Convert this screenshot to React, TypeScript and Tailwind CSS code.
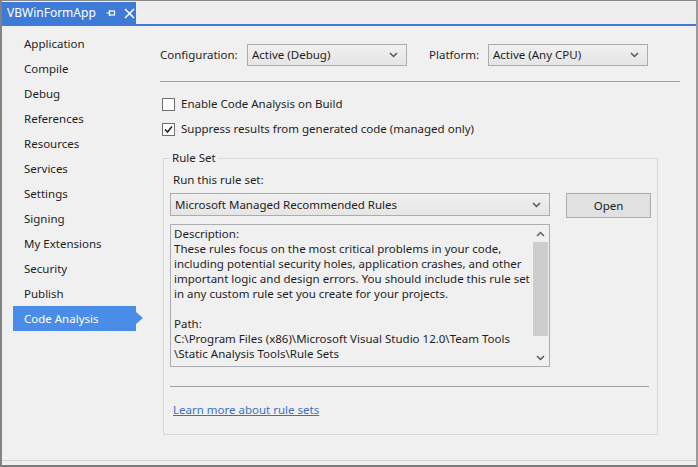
import React from 'react';

const pages = [
  'Application',
  'Compile',
  'Debug',
  'References',
  'Resources',
  'Services',
  'Settings',
  'Signing',
  'My Extensions',
  'Security',
  'Publish',
  'Code Analysis',
];

function Chevron() {
  return (
    <svg width="9" height="6" viewBox="0 0 9 6" className="shrink-0">
      <path d="M1 1 L4.5 4.5 L8 1" fill="none" stroke="#555" strokeWidth="1.5" />
    </svg>
  );
}

function Select({ value, className }: { value: string; className: string }) {
  return (
    <div
      className={
        'flex items-center justify-between border border-[#acacac] bg-gradient-to-b from-[#f0f0f0] to-[#e5e5e5] pl-[4px] pr-[8px] ' +
        className
      }
    >
      <span>{value}</span>
      <Chevron />
    </div>
  );
}

function CheckBox({ checked, label }: { checked?: boolean; label: string }) {
  return (
    <div className="flex items-center h-[14px]">
      <div className="w-[13px] h-[13px] border border-[#707070] bg-white flex items-center justify-center ml-[2px]">
        {checked && (
          <svg width="9" height="9" viewBox="0 0 9 9">
            <path d="M1 4.5 L3.5 7 L8 1.5" fill="none" stroke="#222" strokeWidth="1.6" />
          </svg>
        )}
      </div>
      <span className="ml-[6px]">{label}</span>
    </div>
  );
}

export default function App() {
  return (
    <div
      className="w-[698px] h-[467px] bg-[#f0f0f0] border-t border-t-[#8a8a8a] border-l-2 border-l-[#828282] border-r-2 border-r-[#9a9a9a] border-b-2 border-b-[#7a7a7a] flex flex-col text-[11.5px] text-[#1e1e1e] overflow-hidden"
      style={{ fontFamily: '"Noto Sans", "Open Sans", sans-serif' }}
    >
      {/* tab strip */}
      <div className="h-[23px] flex items-end bg-[#eeeeee]">
        <div className="w-[134px] h-[22px] bg-[#3d7bd6] flex items-center pl-[5px] text-white text-[12px]">
          <span>VBWinFormApp</span>
          <svg width="10" height="10" viewBox="0 0 10 10" className="ml-[10px]">
            <path d="M0.5 5 H3.5 M3.5 2 V8" stroke="white" strokeWidth="1.2" fill="none" />
            <rect x="3.5" y="3" width="5" height="4" stroke="white" strokeWidth="1.2" fill="none" />
          </svg>
          <svg width="11" height="11" viewBox="0 0 11 11" className="ml-[8px]">
            <path d="M1 1 L10 10 M10 1 L1 10" stroke="white" strokeWidth="1.5" />
          </svg>
        </div>
      </div>
      <div className="h-[2px] bg-[#3d7bd6]" />

      <div className="flex flex-1 border-b border-b-[#d4d4d4] mb-[4px]">
        {/* sidebar */}
        <div className="w-[158px] pt-[5px] pl-[11px] flex flex-col">
          {pages.map((p) => {
            const sel = p === 'Code Analysis';
            return (
              <div key={p} className="relative">
                <div
                  className={
                    'w-[123px] h-[25px] flex items-center pl-[11px] ' +
                    (sel ? 'bg-[#4a8de8] text-white' : '')
                  }
                >
                  {p}
                </div>
                {sel && (
                  <div className="absolute left-[123px] top-[6px] w-0 h-0 border-y-[6px] border-y-transparent border-l-[7px] border-l-[#4a8de8]" />
                )}
              </div>
            );
          })}
        </div>

        {/* main */}
        <div className="flex-1 pt-[18px] flex flex-col">
          <div className="flex items-center h-[22px]">
            <span className="w-[87px]">Configuration:</span>
            <Select value="Active (Debug)" className="w-[160px] h-[22px]" />
            <span className="ml-[22px] w-[59px]">Platform:</span>
            <Select value="Active (Any CPU)" className="w-[160px] h-[22px]" />
          </div>
          <div className="h-px bg-[#a0a0a0] w-[520px] mt-[15px]" />

          <div className="mt-[15px] flex flex-col gap-[11px]">
            <CheckBox label="Enable Code Analysis on Build" />
            <CheckBox checked label="Suppress results from generated code (managed only)" />
          </div>

          {/* group box */}
          <div className="relative mt-[22px] ml-[3px] w-[495px] h-[277px] border border-[#d8d8d8] pl-[6px] pt-[13px]">
            <span className="absolute left-[6px] top-[-8px] px-[2px] bg-[#f0f0f0] leading-[14px]">Rule Set</span>
            <div className="pl-[3px] h-[16px] leading-[16px]">Run this rule set:</div>
            <div className="flex items-start mt-[5px]">
              <Select value="Microsoft Managed Recommended Rules" className="w-[380px] h-[23px]" />
              <div className="ml-[16px] w-[85px] h-[25px] border border-[#acacac] bg-[#e1e1e1] flex items-center justify-center">
                Open
              </div>
            </div>

            <div className="mt-[6px] w-[380px] h-[143px] border border-[#abadb3] flex">
              <div className="flex-1 min-w-0 pl-[3px] pt-[1px] leading-[15px] whitespace-nowrap overflow-hidden">
                <div>Description:</div>
                <div>These rules focus on the most critical problems in your code,</div>
                <div>including potential security holes, application crashes, and other</div>
                <div>important logic and design errors. You should include this rule set</div>
                <div>in any custom rule set you create for your projects.</div>
                <div className="h-[15px]" />
                <div>Path:</div>
                <div>C:\Program Files (x86)\Microsoft Visual Studio 12.0\Team Tools</div>
                <div>\Static Analysis Tools\Rule Sets</div>
              </div>
              <div className="w-[17px] flex flex-col items-center bg-[#f0f0f0]">
                <div className="h-[17px] flex items-center justify-center">
                  <svg width="9" height="6" viewBox="0 0 9 6">
                    <path d="M1 5 L4.5 1.5 L8 5" fill="none" stroke="#606060" strokeWidth="1.5" />
                  </svg>
                </div>
                <div className="w-[15px] h-[94px] bg-[#cdcdcd]" />
                <div className="flex-1" />
                <div className="h-[17px] flex items-center justify-center">
                  <Chevron />
                </div>
              </div>
            </div>

            <div className="mt-[19px] w-[479px] h-px bg-[#a0a0a0]" />
            <div className="mt-[14px] pl-[3px] text-[#3f6fbf] underline">Learn more about rule sets</div>
          </div>
        </div>
      </div>
    </div>
  );
}
